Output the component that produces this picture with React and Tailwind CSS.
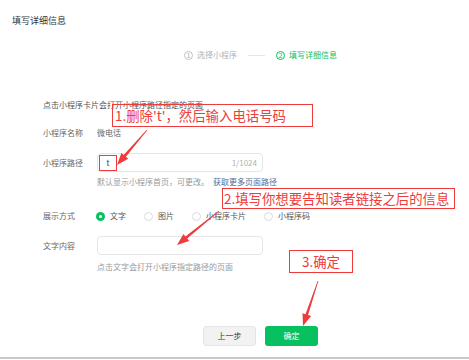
const font = { fontFamily: '"Noto Sans CJK SC", "Noto Sans", sans-serif' };

// tapered arrow: thin at start, filled head at the tip
function arrowPoints(sx, sy, tx, ty) {
  const dx = tx - sx;
  const dy = ty - sy;
  const len = Math.hypot(dx, dy);
  const ux = dx / len;
  const uy = dy / len;
  const nx = -uy;
  const ny = ux;
  const head = 12;
  const bx = tx - ux * head;
  const by = ty - uy * head;
  const p = (x, y) => `${x.toFixed(1)},${y.toFixed(1)}`;
  return [
    p(sx + nx * 0.4, sy + ny * 0.4),
    p(bx + nx * 1.4, by + ny * 1.4),
    p(bx + nx * 4.5, by + ny * 4.5),
    p(tx, ty),
    p(bx - nx * 4.5, by - ny * 4.5),
    p(bx - nx * 1.4, by - ny * 1.4),
    p(sx - nx * 0.4, sy - ny * 0.4),
  ].join(" ");
}

function Radio({ checked, label }) {
  return (
    <div className="flex items-center gap-[5px]">
      {checked ? (
        <span className="w-[9px] h-[9px] rounded-full bg-[#07c160] flex items-center justify-center">
          <span className="w-[3px] h-[3px] rounded-full bg-white" />
        </span>
      ) : (
        <span className="w-[9px] h-[9px] rounded-full border border-[#dcdcdc] bg-white" />
      )}
      <span className="text-[8px] leading-[12px] text-[#555]">{label}</span>
    </div>
  );
}

function Row({ label, children, className = "" }) {
  return (
    <div className={`flex items-center ${className}`}>
      <div className="w-[54px] shrink-0 text-[8px] leading-[12px] text-[#666]">{label}</div>
      {children}
    </div>
  );
}

export default function App() {
  const arrows = [
    [147, 130, 117, 165],
    [219, 211, 177, 245],
    [318, 281, 303, 326],
  ];

  return (
    <div className="relative w-[469px] h-[360px] bg-white overflow-hidden flex flex-col" style={font}>
      {/* Title */}
      <div className="pt-[15px] pl-[12px] text-[9px] leading-[12px] text-[#353535]">填写详细信息</div>

      {/* Steps */}
      <div className="mt-[22px] pl-[184px] flex items-center h-[12px]">
        <span className="w-[9px] h-[9px] rounded-full border border-[#c4c4c4] text-[#b2b2b2] text-[7px] leading-none flex items-center justify-center">1</span>
        <span className="ml-[4px] text-[8px] text-[#b2b2b2]">选择小程序</span>
        <span className="ml-[11px] w-[17px] h-px bg-[#e5e5e5]" />
        <span className="ml-[11px] w-[9px] h-[9px] rounded-full border border-[#07c160] text-[#07c160] text-[7px] leading-none flex items-center justify-center">2</span>
        <span className="ml-[4px] text-[8px] text-[#07c160]">填写详细信息</span>
      </div>

      {/* Form */}
      <div className="pl-[43px] flex flex-col">
        <div className="mt-[38px] text-[8px] leading-[12px] text-[#555]">点击小程序卡片会打开小程序路径指定的页面</div>

        <Row label="小程序名称" className="mt-[16px] h-[12px]">
          <span className="text-[8px] leading-[12px] text-[#666]">微电话</span>
        </Row>

        <Row label="小程序路径" className="mt-[14px]">
          <div className="w-[166px] h-[19px] border border-[#e6e6e6] rounded-[4px] flex items-center justify-between pl-[1px] pr-[5px]">
            <span className="w-[18px] h-[16px] border border-[#ee3b3b] flex items-center justify-center text-[8px] text-[#353535]">t</span>
            <span className="text-[8px] text-[#b2b2b2]">1/1024</span>
          </div>
        </Row>
        <div className="mt-[4px] pl-[54px] text-[8px] leading-[12px] text-[#999] flex">
          <span>默认显示小程序首页，可更改。</span>
          <span className="ml-[4px] text-[#576b95]">获取更多页面路径</span>
        </div>

        <Row label="展示方式" className="mt-[22px] h-[12px]">
          <div className="flex items-center gap-[18px] -ml-[1px]">
            <Radio checked label="文字" />
            <Radio label="图片" />
            <Radio label="小程序卡片" />
            <Radio label="小程序码" />
          </div>
        </Row>

        <Row label="文字内容" className="mt-[14px]">
          <div className="w-[166px] h-[19px] border border-[#e6e6e6] rounded-[4px]" />
        </Row>
        <div className="mt-[6px] pl-[54px] text-[8px] leading-[12px] text-[#999]">点击文字会打开小程序指定路径的页面</div>
      </div>

      {/* Buttons */}
      <div className="mt-[53px] pl-[203px] flex gap-[9px]">
        <button className="w-[53px] h-[20px] rounded-[3px] bg-[#f2f2f2] border border-[#e5e5e5] text-[8px] text-[#353535]">上一步</button>
        <button className="w-[53px] h-[20px] rounded-[3px] bg-[#07c160] text-[8px] text-white">确定</button>
      </div>

      <div className="mt-auto mb-[1px] h-[2px] bg-[#c8c8c8]" />

      {/* Annotations */}
      <div className="absolute left-[112px] top-[104px] w-[201px] h-[23px] border-[1.5px] border-[#ee3b3b] flex items-center pl-[2px] text-[13.4px] leading-none text-[#ee3b3b] whitespace-nowrap">
        1.删除't'，然后输入电话号码
      </div>
      <div className="absolute left-[222px] top-[188px] w-[233px] h-[21px] border-[1.5px] border-[#ee3b3b] flex items-center pl-[1px] text-[13.4px] leading-none text-[#ee3b3b] whitespace-nowrap">
        2.填写你想要告知读者链接之后的信息
      </div>
      <div className="absolute left-[289px] top-[250px] w-[64px] h-[23px] border-[1.5px] border-[#ee3b3b] flex items-center justify-center text-[13.4px] leading-none text-[#ee3b3b] whitespace-nowrap">
        3.确定
      </div>
      <svg className="absolute inset-0 pointer-events-none" width="469" height="360">
        {arrows.map((a, i) => (
          <polygon key={i} points={arrowPoints(...a)} fill="#ee3b3b" />
        ))}
      </svg>
    </div>
  );
}
